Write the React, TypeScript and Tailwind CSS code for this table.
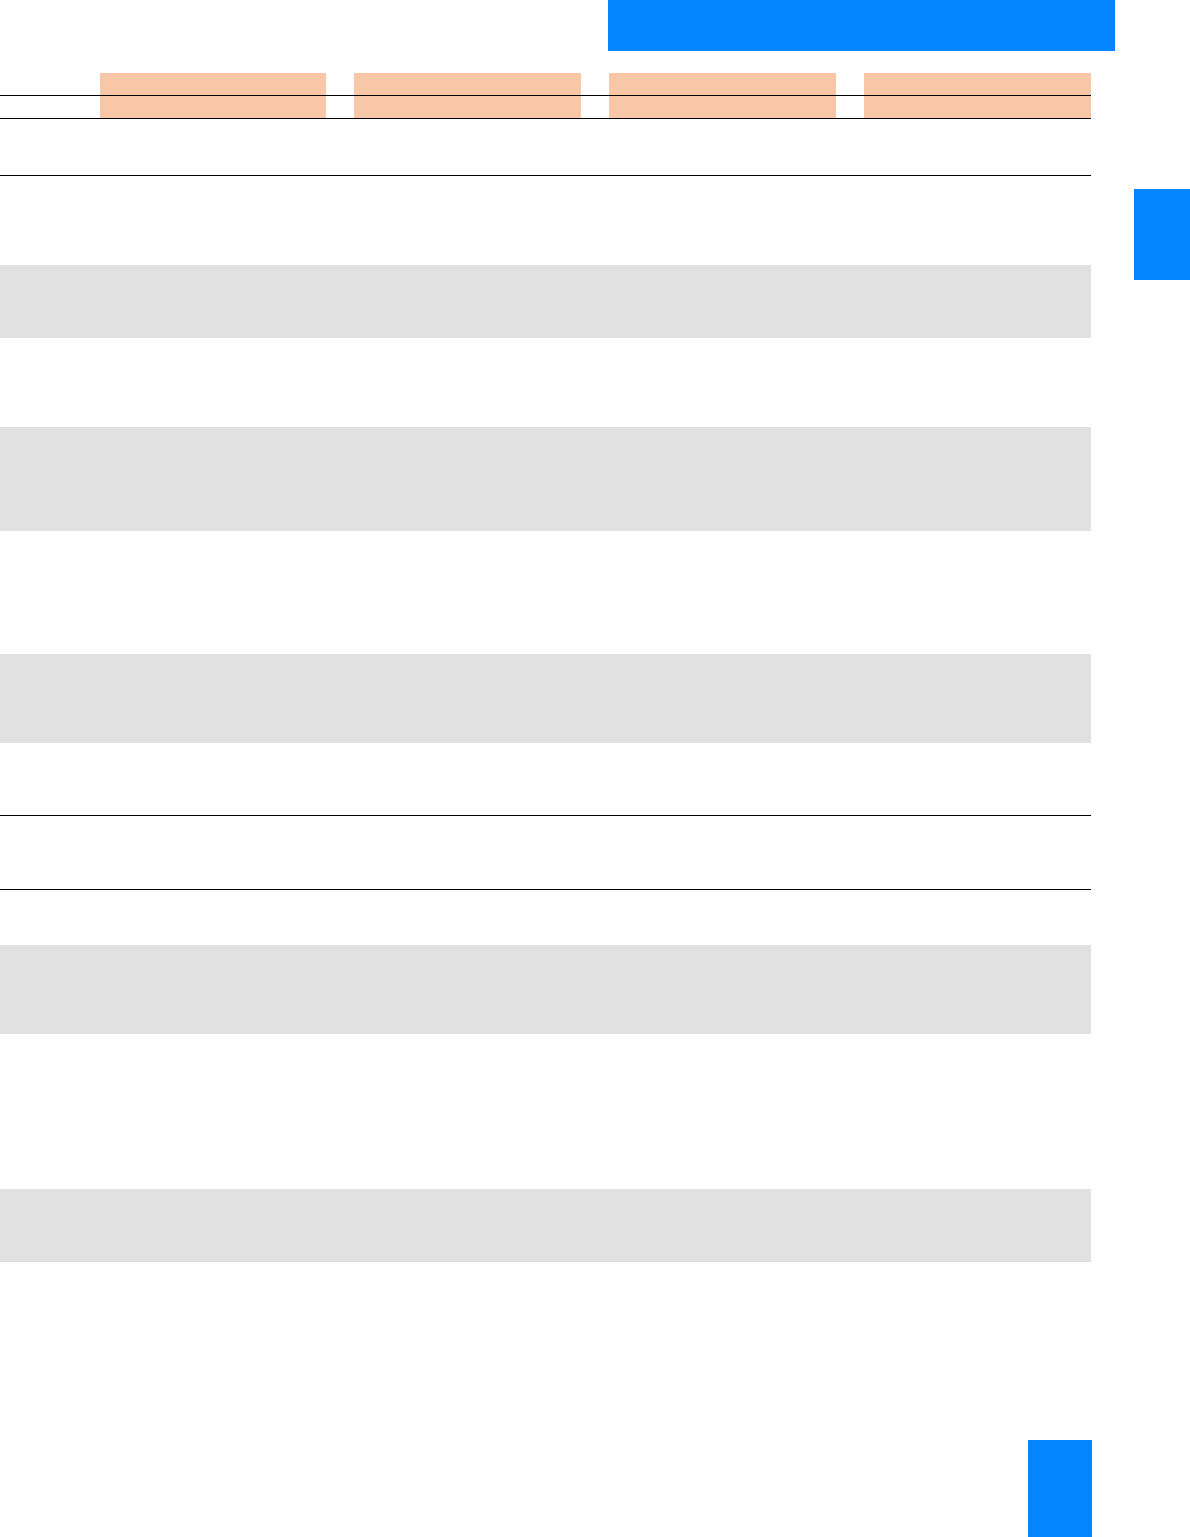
const peachCells = [
  { w: 'w-[226px]', ml: 'ml-[100px]' },
  { w: 'w-[227px]', ml: 'ml-[28px]' },
  { w: 'w-[227px]', ml: 'ml-[28px]' },
  { w: 'w-[227px]', ml: 'ml-[28px]' },
]

function HeaderRow() {
  return (
    <div className="flex h-[23px] border-b border-black">
      {peachCells.map((c, i) => (
        <div key={i} className={`${c.ml} ${c.w} bg-[#f8c7a8]`} />
      ))}
    </div>
  )
}

export default function App() {
  return (
    <div className="flex h-[1537px] w-[1190px] flex-col overflow-hidden bg-white">
      <div className="pl-[608px]">
        <div className="h-[51px] w-[507px] bg-[#0385ff]" />
      </div>

      <div className="flex flex-1">
        <div className="flex w-[1091px] flex-col pt-[22px]">
          <HeaderRow />
          <HeaderRow />
          <div className="h-[57px] border-b border-black" />

          <div className="mt-[89px] h-[73px] bg-[#e1e1e1]" />
          <div className="mt-[89px] h-[104px] bg-[#e1e1e1]" />
          <div className="mt-[123px] h-[89px] bg-[#e1e1e1]" />

          <div className="h-[73px] border-b border-black" />
          <div className="h-[74px] border-b border-black" />

          <div className="mt-[55px] h-[89px] bg-[#e1e1e1]" />
          <div className="mt-[155px] h-[73px] bg-[#e1e1e1]" />

          <div className="ml-auto mr-[-1px] mt-[178px] h-[97px] w-[64px] bg-[#0385ff]" />
        </div>

        <div className="flex flex-1 justify-end pt-[138px]">
          <div className="h-[91px] w-[56px] bg-[#0385ff]" />
        </div>
      </div>
    </div>
  )
}
